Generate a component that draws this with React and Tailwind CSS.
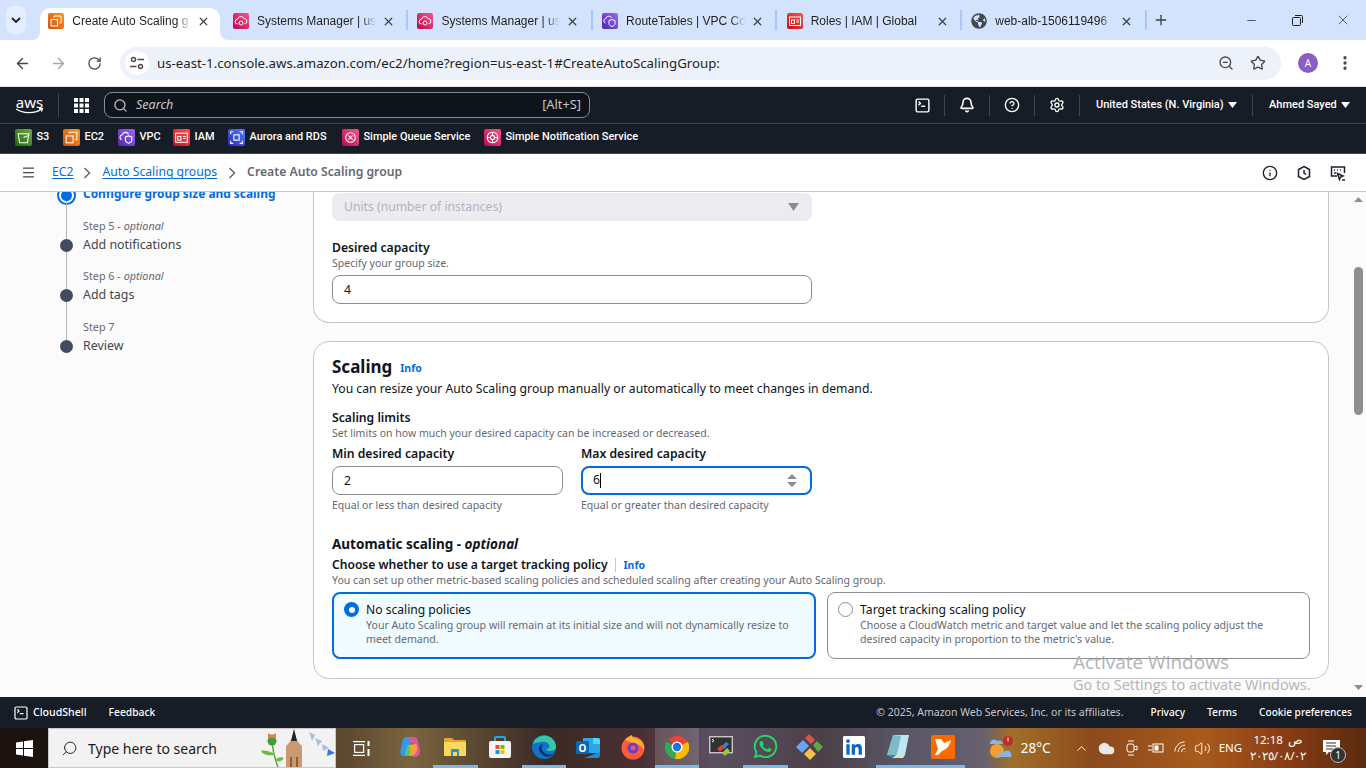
// App.jsx
import {
  ArrowLeft,
  ArrowRight,
  Bell,
  ChevronUp,
  CircleHelp,
  Cloud,
  EllipsisVertical,
  Info,
  Menu,
  Minus,
  Plus,
  RotateCw,
  Search,
  Settings,
  SquareTerminal,
  Star,
  Volume2,
  Wifi,
  X,
  ZoomOut,
} from "lucide-react";
import { FaGlobeAmericas, FaWhatsapp, FaLinkedin } from "react-icons/fa";

const Caret = () => (
  <svg width="9" height="6" viewBox="0 0 9 6" className="shrink-0">
    <path d="M0 0h9L4.5 6z" fill="currentColor" />
  </svg>
);

const Glyph = ({ children }) => (
  <svg viewBox="0 0 16 16" className="size-full" fill="none" stroke="#fff" strokeWidth="1">
    {children}
  </svg>
);

const ec2Glyph = (
  <Glyph>
    <rect x="3" y="6.5" width="6.5" height="6.5" />
    <path d="M6 4.5V3h7v7h-1.5" />
  </Glyph>
);
const pinkCloud = (
  <Glyph>
    <path d="M4.5 11a2.4 2.4 0 0 1 0-4.8 3.4 3.4 0 0 1 6.5-.5 2.6 2.6 0 0 1 .6 5.2" />
    <circle cx="8" cy="10" r="2" />
  </Glyph>
);
const vpcGlyph = (
  <Glyph>
    <path d="M3.5 10a2.2 2.2 0 0 1 .2-4.3 3.4 3.4 0 0 1 6.3-.7" />
    <path d="M7 7.5l3-1 3 1v3.2c0 1.4-1.4 2.3-3 2.8-1.6-.5-3-1.4-3-2.8z" />
  </Glyph>
);
const iamGlyph = (
  <Glyph>
    <rect x="2.5" y="4" width="11" height="8.5" />
    <rect x="4.5" y="7" width="3" height="3.5" />
    <path d="M9.5 7H12M9.5 9H12" />
  </Glyph>
);
const s3Glyph = (
  <Glyph>
    <path d="M3 4.5h10l-1.3 8.5H4.3z" />
    <path d="M8 8l5-2" />
  </Glyph>
);
const auroraGlyph = (
  <Glyph>
    <rect x="5.5" y="5.5" width="5" height="5" />
    <path d="M2.5 5V2.500H5M11 2.500h2.500V5M13.500 11v2.500H11M5 13.500H2.500V11" />
  </Glyph>
);
const sqsGlyph = (
  <Glyph>
    <circle cx="8" cy="8" r="4.5" />
    <path d="M6 6l4 4M10 6l-4 4" />
  </Glyph>
);
const snsGlyph = (
  <Glyph>
    <circle cx="8" cy="8" r="2" />
    <circle cx="8" cy="8" r="5" />
    <path d="M3 8h3M10 8h3M8 3v3M8 10v3" />
  </Glyph>
);

const orange = "bg-gradient-to-tr from-[#c8511b] to-[#ff9900]";
const pink = "bg-gradient-to-tr from-[#b0084d] to-[#ff4f8b]";
const purple = "bg-gradient-to-tr from-[#4d27a8] to-[#a166ff]";
const red = "bg-gradient-to-tr from-[#bd0816] to-[#ff5252]";
const green = "bg-gradient-to-tr from-[#1b660f] to-[#6cae3e]";
const blue = "bg-gradient-to-tr from-[#2e27ad] to-[#527fff]";

const tabs = [
  { title: "Create Auto Scaling g", bg: orange, glyph: ec2Glyph, active: true },
  { title: "Systems Manager | us", bg: pink, glyph: pinkCloud },
  { title: "Systems Manager | us", bg: pink, glyph: pinkCloud },
  { title: "RouteTables | VPC Co", bg: purple, glyph: vpcGlyph },
  { title: "Roles | IAM | Global", bg: red, glyph: iamGlyph },
  { title: "web-alb-1506119496", globe: true },
];

const favorites = [
  { name: "S3", width: "w-[48px]", bg: green, glyph: s3Glyph },
  { name: "EC2", width: "w-[55px]", bg: orange, glyph: ec2Glyph },
  { name: "VPC", width: "w-[55px]", bg: purple, glyph: vpcGlyph },
  { name: "IAM", width: "w-[55px]", bg: red, glyph: iamGlyph },
  { name: "Aurora and RDS", width: "w-[114px]", bg: blue, glyph: auroraGlyph },
  { name: "Simple Queue Service", width: "w-[142px]", bg: pink, glyph: sqsGlyph },
  { name: "Simple Notification Service", width: "w-[170px]", bg: pink, glyph: snsGlyph },
];

function ChromeTab({ tab }) {
  return (
    <div className="relative flex h-full w-[184.6px] items-end justify-center">
      <div
        className={`relative flex h-[32px] w-[180px] items-center pb-[10px] pl-[8px] pt-[4px] ${
          tab.active ? "rounded-t-[10px] bg-white" : ""
        }`}
      >
        {tab.active && (
          <>
            <svg width="8" height="8" viewBox="0 0 8 8" className="absolute bottom-0 left-[-8px]">
              <path d="M8 0v8H0a8 8 0 0 0 8-8z" fill="#fff" />
            </svg>
            <svg width="8" height="8" viewBox="0 0 8 8" className="absolute bottom-0 right-[-8px]">
              <path d="M0 0v8h8a8 8 0 0 1-8-8z" fill="#fff" />
            </svg>
          </>
        )}
        {tab.globe ? (
          <FaGlobeAmericas className="size-[16px] shrink-0 text-[#45494f]" />
        ) : (
          <div className={`size-[16px] shrink-0 rounded-[2px] ${tab.bg}`}>{tab.glyph}</div>
        )}
        <span className="ml-[8px] w-[119px] overflow-hidden whitespace-nowrap font-['Liberation_Sans',sans-serif] text-[12px] text-[#1f1f1f] [mask-image:linear-gradient(90deg,#000_88%,transparent)]">
          {tab.title}
        </span>
        <X size={13} strokeWidth={2.2} className="ml-[6px] shrink-0 text-[#3c4043]" />
      </div>
      {!tab.active && (
        <div className="absolute right-[-1px] top-[10px] h-[20px] w-[2px] bg-[#a8c7fa]" />
      )}
    </div>
  );
}

function ChromeBars() {
  return (
    <>
      <div className="flex h-[40px] items-stretch bg-[#d3e3fd] font-['Noto_Sans',sans-serif]">
        <div className="ml-[6px] mt-[6px] flex h-[28px] w-[20px] items-center justify-center rounded-[8px] bg-[#e4edfd]">
          <svg width="10" height="6" viewBox="0 0 10 6" fill="none" stroke="#1f1f1f" strokeWidth="1.8">
            <path d="M1 1l4 4 4-4" />
          </svg>
        </div>
        <div className="ml-[12px] flex">
          {tabs.map((tab, i) => (
            <ChromeTab key={i} tab={tab} />
          ))}
        </div>
        <div className="flex w-[30px] items-center justify-center text-[#3c4043]">
          <Plus size={16} strokeWidth={2} />
        </div>
        <div className="ml-auto flex text-[#1f1f1f]">
          <div className="flex w-[46px] items-center justify-center">
            <Minus size={13} strokeWidth={1.3} />
          </div>
          <div className="flex w-[46px] items-center justify-center">
            <svg width="11" height="11" viewBox="0 0 11 11" fill="none" stroke="currentColor">
              <rect x="0.5" y="2.5" width="8" height="8" rx="1" />
              <path d="M3 .5h6.5a1 1 0 0 1 1 1V8" />
            </svg>
          </div>
          <div className="flex w-[46px] items-center justify-center">
            <X size={16} strokeWidth={1} />
          </div>
        </div>
      </div>

      <div className="flex h-[47px] items-center border-b border-[#e3e3e3] bg-white pl-[4px] font-['Noto_Sans',sans-serif]">
        <div className="flex w-[36px] justify-center text-[#474747]">
          <ArrowLeft size={17} strokeWidth={2} />
        </div>
        <div className="flex w-[36px] justify-center text-[#a6a6a6]">
          <ArrowRight size={17} strokeWidth={2} />
        </div>
        <div className="flex w-[36px] justify-center text-[#474747]">
          <RotateCw size={15} strokeWidth={2} />
        </div>
        <div className="ml-[8px] flex h-[33px] w-[1161px] items-center rounded-full bg-[#edf2fa] pl-[5px] pr-[7px]">
          <div className="flex size-[24px] items-center justify-center rounded-full bg-white text-[#474747]">
            <svg width="14" height="14" viewBox="0 0 14 14" fill="none" stroke="currentColor" strokeWidth="1.4">
              <circle cx="3.5" cy="3.5" r="2" />
              <path d="M7.5 3.5H14M0 10.5h6.500" />
              <circle cx="10.5" cy="10.5" r="2" />
            </svg>
          </div>
          <span className="ml-[8px] pt-px text-[13.25px] text-[#1f1f1f]">
            us-east-1.console.aws.amazon.com/ec2/home?region=us-east-1#CreateAutoScalingGroup:
          </span>
          <div className="ml-auto flex w-[32px] justify-center text-[#474747]">
            <ZoomOut size={16} strokeWidth={2} />
          </div>
          <div className="flex w-[32px] justify-center text-[#474747]">
            <Star size={16} strokeWidth={2} />
          </div>
        </div>
        <div className="ml-[17px] flex size-[20px] items-center justify-center rounded-full bg-[#8a5cc4] text-[10px] text-white">
          A
        </div>
        <EllipsisVertical size={18} strokeWidth={2.4} className="ml-[18px] text-[#474747]" />
      </div>
    </>
  );
}

function AwsHeader() {
  return (
    <div className="bg-[#161d26] font-['Roboto',sans-serif] text-white">
      <div className="flex h-[37px] items-center border-b border-[#424650]">
        <div className="ml-[15px] flex w-[29px] flex-col items-center font-['Noto_Sans',sans-serif]">
          <span className="text-[15px] leading-[13px]">aws</span>
          <svg width="29" height="6" viewBox="0 0 29 6" fill="none" className="-mt-[1px]">
            <path d="M1 1c7 4.5 18 5 25 .5M24 .5l3.500 0-1 3" stroke="#fff" strokeWidth="1.3" />
          </svg>
        </div>
        <div className="ml-[14px] h-[24px] w-px bg-[#424650]" />
        <svg width="15" height="15" viewBox="0 0 15 15" fill="#fff" className="ml-[15px]">
          <rect width="4" height="4" />
          <rect x="5.5" width="4" height="4" />
          <rect x="11" width="4" height="4" />
          <rect y="5.5" width="4" height="4" />
          <rect x="5.5" y="5.5" width="4" height="4" />
          <rect x="11" y="5.5" width="4" height="4" />
          <rect y="11" width="4" height="4" />
          <rect x="5.5" y="11" width="4" height="4" />
          <rect x="11" y="11" width="4" height="4" />
        </svg>
        <div className="ml-[15px] flex h-[26px] w-[486px] items-center rounded-[8px] border border-[#8c8c94] bg-[#0f141a] px-[8px] font-['Noto_Sans',sans-serif] text-[#c6c6cd]">
          <Search size={15} strokeWidth={2} />
          <span className="ml-[8px] text-[12.5px] italic">Search</span>
          <span className="ml-auto text-[12.8px]">[Alt+S]</span>
        </div>
        <div className="ml-[311px] flex w-[43px] justify-center">
          <SquareTerminal size={17} strokeWidth={2} />
        </div>
        <div className="h-[21px] w-px bg-[#424650]" />
        <div className="flex w-[44px] justify-center">
          <Bell size={16} strokeWidth={2.4} />
        </div>
        <div className="h-[21px] w-px bg-[#424650]" />
        <div className="flex w-[44px] justify-center">
          <CircleHelp size={16} strokeWidth={2} />
        </div>
        <div className="h-[21px] w-px bg-[#424650]" />
        <div className="flex w-[44px] justify-center">
          <Settings size={16} strokeWidth={2} />
        </div>
        <div className="h-[21px] w-px bg-[#424650]" />
        <div className="flex w-[172px] items-center gap-[4px] pl-[16px] text-[11px] font-medium">
          <span className="whitespace-nowrap">United States (N. Virginia)</span>
          <Caret />
        </div>
        <div className="h-[21px] w-px bg-[#424650]" />
        <div className="flex w-[113px] items-center gap-[4px] pl-[16px] text-[11px] font-medium">
          <span className="whitespace-nowrap">Ahmed Sayed</span>
          <Caret />
        </div>
      </div>
      <div className="flex h-[30px] items-center border-b border-[#424650] pb-[1px] pl-[15px]">
        {favorites.map((fav) => (
          <div key={fav.name} className={`flex shrink-0 items-center gap-[4.5px] ${fav.width}`}>
            <div className={`size-[17px] shrink-0 rounded-[2px] ${fav.bg}`}>{fav.glyph}</div>
            <span className="mb-[1px] whitespace-nowrap text-[10.95px] font-medium">{fav.name}</span>
          </div>
        ))}
      </div>
    </div>
  );
}

function Breadcrumbs() {
  const chevron = (
    <svg width="8" height="12" viewBox="0 0 8 12" fill="none" stroke="#656871" strokeWidth="1.5">
      <path d="M1.5 1l5 5-5 5" />
    </svg>
  );
  return (
    <div className="flex h-[38px] items-center border-b border-[#c6c6cd] bg-white pl-[21px] pr-[20px] font-['Noto_Sans',sans-serif] text-[12.2px]">
      <Menu size={15} strokeWidth={2} className="text-[#424650]" />
      <a className="ml-[16px] text-[#006ce0] underline underline-offset-2">EC2</a>
      <div className="ml-[10px] mr-[11px]">{chevron}</div>
      <a className="text-[#006ce0] underline underline-offset-2">Auto Scaling groups</a>
      <div className="ml-[11px] mr-[11px]">{chevron}</div>
      <span className="font-semibold text-[#656871]">Create Auto Scaling group</span>
      <div className="ml-auto flex items-center gap-[18px] text-[#1b232d]">
        <Info size={16} strokeWidth={2} />
        <svg width="16" height="16" viewBox="0 0 16 16" fill="none" stroke="currentColor" strokeWidth="1.5">
          <path d="M8 1.5l5.500 3v7L8 14.500l-5.500-3v-7z" />
          <path d="M8 5v3l2 1.500" />
        </svg>
        <svg width="16" height="16" viewBox="0 0 16 16" fill="none" stroke="currentColor" strokeWidth="1.5">
          <path d="M7 11H1.500V2h13v6" />
          <path d="M4 5h1M7 5h1M10 5h1M4 8h2" />
          <path d="M7.5 8.500l2 6 1-2.500 2.500-1zM12 15h3" />
        </svg>
      </div>
    </div>
  );
}

function StepRow({ step, optional, label }) {
  return (
    <div className="flex h-[50.5px]">
      <div className="flex w-[13px] flex-col items-center">
        <div className="w-px flex-1 bg-[#b4b4bb]" />
        <div className="size-[13px] shrink-0 rounded-full bg-[#414d5c]" />
      </div>
      <div className="mb-[-2px] ml-[10px] flex flex-col justify-end">
        <span className="text-[10.8px] leading-[15px] text-[#656871]">
          {step}
          {optional && (
            <>
              {" - "}
              <i>optional</i>
            </>
          )}
        </span>
        <span className="mt-[3px] text-[12.4px] leading-[18px] text-[#424650]">{label}</span>
      </div>
    </div>
  );
}

function Sidebar() {
  return (
    <div className="w-[313px] shrink-0 pl-[60px]">
      <div className="flex items-start">
        <div className="mt-[-6px] flex w-[13px] justify-center">
          <div className="flex size-[19px] shrink-0 items-center justify-center rounded-full border-[2px] border-[#006ce0] bg-white">
            <div className="size-[11px] rounded-full bg-[#006ce0]" />
          </div>
        </div>
        <span className="ml-[10px] mt-[-8px] text-[11.9px] font-bold leading-[18px] text-[#006ce0]">
          Configure group size and scaling
        </span>
      </div>
      <div className="mt-[-4px]">
        <StepRow step="Step 5" optional label="Add notifications" />
        <StepRow step="Step 6" optional label="Add tags" />
        <StepRow step="Step 7" label="Review" />
      </div>
    </div>
  );
}

const InfoLink = ({ className }) => (
  <span className={`text-[10.5px] font-bold text-[#006ce0] ${className}`}>Info</span>
);

function FormContent() {
  return (
    <div className="w-[1016px] shrink-0 text-[#0f141a]">
      <div className="h-[131px] rounded-b-[16px] border-x border-b border-[#c6c6cd] bg-white px-[18px] pt-px">
        <div className="flex h-[28px] w-[480px] items-center justify-between rounded-[8px] bg-[#ebebf0] pl-[12px] pr-[13px] text-[12.2px] text-[#b4b4bb]">
          <span>Units (number of instances)</span>
          <svg width="11" height="8" viewBox="0 0 11 8">
            <path d="M0 0h11L5.500 8z" fill="#8c8c94" />
          </svg>
        </div>
        <div className="mt-[18px] text-[12.2px] font-semibold leading-[18px]">Desired capacity</div>
        <div className="mt-[-1px] text-[10.5px] leading-[14px] text-[#656871]">Specify your group size.</div>
        <div className="mt-[5px] flex h-[29px] w-[480px] items-center rounded-[8px] border border-[#8c8c94] pl-[11px] pt-px text-[12.2px]">
          4
        </div>
      </div>

      <div className="mt-[18px] h-[338px] rounded-[16px] border border-[#c6c6cd] bg-white px-[18px] pt-[13px]">
        <div className="flex items-center">
          <span className="text-[17px] font-bold leading-[24px]">Scaling</span>
          <InfoLink className="ml-[8px] mt-[3px]" />
        </div>
        <p className="mt-px text-[12.2px] leading-[18px]">
          You can resize your Auto Scaling group manually or automatically to meet changes in demand.
        </p>
        <div className="mt-[11px] text-[12.2px] font-semibold leading-[18px]">Scaling limits</div>
        <div className="mt-[-1px] text-[10.5px] leading-[14px] text-[#656871]">
          Set limits on how much your desired capacity can be increased or decreased.
        </div>

        <div className="mt-[5px] flex gap-[18px]">
          <div className="w-[231px]">
            <div className="text-[12.2px] font-semibold leading-[18px]">Min desired capacity</div>
            <div className="mt-[3px] flex h-[29px] items-center rounded-[8px] border border-[#8c8c94] pl-[11px] pt-px text-[12.2px]">
              2
            </div>
            <div className="mt-[3px] text-[10.5px] leading-[14px] text-[#656871]">
              Equal or less than desired capacity
            </div>
          </div>
          <div className="w-[231px]">
            <div className="text-[12.2px] font-semibold leading-[18px]">Max desired capacity</div>
            <div className="mt-[3px] flex h-[29px] items-center rounded-[8px] border-[2px] border-[#006ce0] pl-[10px] pr-[13px] text-[12.2px]">
              <span>6</span>
              <div className="h-[15px] w-px bg-black" />
              <svg width="10" height="15" viewBox="0 0 10 15" className="ml-auto">
                <path d="M0 6h10L5 1zM0 9h10L5 14z" fill="#8c8c94" />
              </svg>
            </div>
            <div className="mt-[3px] text-[10.5px] leading-[14px] text-[#656871]">
              Equal or greater than desired capacity
            </div>
          </div>
        </div>

        <div className="mt-[22px] text-[13.5px] font-bold leading-[20px]">
          Automatic scaling - <i>optional</i>
        </div>
        <div className="mt-[2px] flex items-center text-[12.1px] font-semibold leading-[18px]">
          <span>Choose whether to use a target tracking policy</span>
          <div className="ml-[7px] h-[14px] w-px bg-[#c6c6cd]" />
          <InfoLink className="ml-[8px]" />
        </div>
        <div className="mt-[-1px] text-[10.55px] leading-[14px] text-[#656871]">
          You can set up other metric-based scaling policies and scheduled scaling after creating your Auto Scaling group.
        </div>

        <div className="mt-[5px] flex gap-[11px]">
          <div className="flex h-[67px] w-[484px] rounded-[8px] border-[2px] border-[#006ce0] bg-[#f0fbff] pl-[10px] pr-[14px] pt-[7px]">
            <div className="mt-px flex size-[15px] shrink-0 items-center justify-center rounded-full bg-[#006ce0]">
              <div className="size-[6px] rounded-full bg-white" />
            </div>
            <div className="ml-[7px]">
              <div className="text-[12.1px] leading-[17px]">No scaling policies</div>
              <div className="text-[10.6px] leading-[14px] text-[#656871]">
                Your Auto Scaling group will remain at its initial size and will not dynamically resize to meet demand.
              </div>
            </div>
          </div>
          <div className="flex h-[67px] w-[483px] rounded-[8px] border border-[#8c8c94] pl-[10px] pr-[14px] pt-[8px]">
            <div className="mt-px size-[15px] shrink-0 rounded-full border border-[#8c8c94] bg-white" />
            <div className="ml-[7px]">
              <div className="text-[12.2px] leading-[17px]">Target tracking scaling policy</div>
              <div className="text-[10.55px] leading-[14px] text-[#656871]">
                Choose a CloudWatch metric and target value and let the scaling policy adjust the desired capacity in proportion to the metric's value.
              </div>
            </div>
          </div>
        </div>
      </div>
    </div>
  );
}

function Scrollbar() {
  return (
    <div className="ml-[22px] flex w-[14px] flex-col items-center pt-[5px]">
      <svg width="9" height="5" viewBox="0 0 9 5" className="shrink-0">
        <path d="M0 5h9L4.5 0z" fill="#8f8f8f" />
      </svg>
      <div className="mt-[65px] h-[148px] w-[9px] shrink-0 rounded-full bg-[#8f8f8f]" />
      <svg width="9" height="5" viewBox="0 0 9 5" className="mb-[7px] mt-auto shrink-0">
        <path d="M0 0h9L4.5 5z" fill="#8f8f8f" />
      </svg>
    </div>
  );
}

function AwsFooter() {
  return (
    <div className="flex h-[31px] shrink-0 items-center bg-[#161d26] pl-[13px] pr-[14px] font-['Noto_Sans',sans-serif] text-[10.5px] text-white">
      <SquareTerminal size={16} strokeWidth={1.8} />
      <span className="ml-[4px] text-[10.6px] font-medium">CloudShell</span>
      <span className="ml-[22px] text-[10.3px] font-medium">Feedback</span>
      <span className="ml-auto text-[#c6c6cd]">© 2025, Amazon Web Services, Inc. or its affiliates.</span>
      <span className="ml-[27px] text-[10.1px] font-medium">Privacy</span>
      <span className="ml-[22px] text-[10.3px] font-medium">Terms</span>
      <span className="ml-[22px] text-[10.1px] font-medium">Cookie preferences</span>
    </div>
  );
}

const taskIcons = [
  {
    key: "copilot",
    icon: (
      <svg width="24" height="24" viewBox="0 0 24 24">
        <path d="M8 2h7c2 0 3 1 3.500 3L21 15c.5 3-1 6-4 7h-3l2-10c-1-4-4-5-8-4z" fill="#e0559c" />
        <path d="M8 2c-3 0-4 2-4.500 4L1.500 16c-.5 3 1 5 3 5h8l-1.500-9c.5-4 1-7-3-10z" fill="#2d9cf0" />
        <path d="M9 10l8-1c2 3 2 6-1 10-2 2-4 2-6 2 2-4 1-8-1-11z" fill="#f3a33f" />
        <path d="M9 10c-2 3-3 6-3 11l5-1c1-4 0-7-2-10z" fill="#58c76b" />
      </svg>
    ),
  },
  {
    key: "explorer",
    open: true,
    icon: (
      <svg width="22" height="20" viewBox="0 0 22 20">
        <path d="M0 2a1 1 0 0 1 1-1h7l2 2h11a1 1 0 0 1 1 1v3H0z" fill="#e5a82e" />
        <rect y="5" width="22" height="14" rx="1" fill="#fbd75b" />
        <path d="M7 19v-6a1 1 0 0 1 1-1h6a1 1 0 0 1 1 1v6h-2v-4H9v4z" fill="#2f8ecb" />
      </svg>
    ),
  },
  {
    key: "store",
    icon: (
      <svg width="24" height="24" viewBox="0 0 24 24">
        <path d="M7 7V3a1 1 0 0 1 1-1h8a1 1 0 0 1 1 1v4" fill="none" stroke="#22a7e0" strokeWidth="2" />
        <rect x="1" y="6" width="22" height="17" rx="2" fill="#f4f4f4" />
        <rect x="7.5" y="10" width="4" height="4" fill="#f25022" />
        <rect x="12.5" y="10" width="4" height="4" fill="#7fba00" />
        <rect x="7.5" y="15" width="4" height="4" fill="#00a4ef" />
        <rect x="12.5" y="15" width="4" height="4" fill="#ffb900" />
      </svg>
    ),
  },
  {
    key: "edge",
    open: true,
    icon: (
      <svg width="24" height="24" viewBox="0 0 24 24">
        <circle cx="12" cy="12" r="12" fill="#1173c8" />
        <path d="M1 9C3 2 10 0 15 1c5 1 9 6 9 11 0 3-3 4-6 4s-4-1-4-2c3 0 4-2 3-4-1-3-5-4-8-3-3 0-6 1-8 2z" fill="#37c6a5" />
        <path d="M8 17c-2-3-1-7 3-8-3 3-1 8 3 10 2 1 5 1 7-1-2 4-8 6-13-1z" fill="#0c2d63" />
      </svg>
    ),
  },
  {
    key: "outlook",
    icon: (
      <svg width="24" height="24" viewBox="0 0 24 24">
        <path d="M7 3h10l7 5v10H7z" fill="#28a8ea" />
        <path d="M17 3h5a2 2 0 0 1 2 2v4h-7z" fill="#50d9ff" />
        <path d="M8 23l16-6v3a3 3 0 0 1-3 3z" fill="#1490df" />
        <rect y="6" width="13" height="13" rx="1.5" fill="#0f64b4" />
        <text x="6.5" y="16.5" textAnchor="middle" fontSize="10" fontWeight="700" fill="#fff" fontFamily="Noto Sans">
          O
        </text>
      </svg>
    ),
  },
  {
    key: "firefox",
    icon: (
      <svg width="24" height="26" viewBox="0 0 24 26">
        <circle cx="12" cy="14" r="11.5" fill="#ff5b3a" />
        <path d="M4 6c2-3 5-4 7-5 0 3 3 3 6 4 4 2 7 6 6 11-4-6-8-6-11-6-2-2-5-3-8-4z" fill="#ffb02e" />
        <circle cx="12" cy="14" r="5.5" fill="#6a3fc4" />
        <circle cx="12" cy="14" r="2.5" fill="#e84f9b" />
      </svg>
    ),
  },
  {
    key: "chrome",
    open: true,
    light: true,
    icon: (
      <svg width="24" height="24" viewBox="0 0 24 24">
        <path d="M12 12L3.500 4.500A12 12 0 0 1 23 8z" fill="#ea4335" />
        <path d="M12 12L1.300 6.500A12 12 0 0 0 10 24z" fill="#34a853" />
        <path d="M12 12l11-5A12 12 0 0 1 10 24z" fill="#fbbc04" />
        <circle cx="12" cy="12" r="5.5" fill="#fff" />
        <circle cx="12" cy="12" r="4.2" fill="#1a73e8" />
      </svg>
    ),
  },
  {
    key: "terminal-app",
    icon: (
      <svg width="24" height="22" viewBox="0 0 24 22">
        <rect x=".7" y=".7" width="22.6" height="16" fill="#333" stroke="#c7c7c7" strokeWidth="1.4" />
        <path d="M3 3l2 1.500L3 6" fill="none" stroke="#fff" />
        <path d="M12 11l5-5 3 2-5 5z" fill="#3b82e0" />
        <path d="M8 13l4-4 3 3-4 4z" fill="#e33b3b" />
        <path d="M13 17l5-5 3 3-5 5z" fill="#9cca3c" />
      </svg>
    ),
  },
  { key: "whatsapp", open: true, icon: <FaWhatsapp size={27} className="text-[#25d366]" /> },
  {
    key: "kite",
    icon: (
      <svg width="28" height="26" viewBox="0 0 28 26">
        <path d="M0 13l7-7 6 6-7 7z" fill="#6aa5f0" />
        <path d="M9 4l4-4 6 6-4 4z" fill="#d9534f" />
        <path d="M17 11l4-4 6 6-5 5z" fill="#5fa84a" />
        <path d="M8 20l6-6 6 6-6 6z" fill="#f2c14e" />
      </svg>
    ),
  },
  {
    key: "linkedin",
    icon: (
      <div className="relative flex size-[22px] items-center justify-center rounded-[2px] bg-[#0a66c2]">
        <FaLinkedin size={26} className="text-white" />
      </div>
    ),
  },
  {
    key: "notepad",
    open: true,
    icon: (
      <svg width="22" height="24" viewBox="0 0 22 24">
        <path d="M6 0h16l-4 20H0z" fill="#bfe7ee" />
        <path d="M6 0l-6 20 6 4 3-1 5-22z" fill="#4f9fb0" opacity=".6" />
        <path d="M18 20l-2 3H6l3-3z" fill="#e8e0b0" />
      </svg>
    ),
  },
  {
    key: "orange-app",
    open: true,
    icon: (
      <div className="flex size-[24px] items-center justify-center rounded-[2px] bg-[#ff6a00]">
        <svg width="18" height="18" viewBox="0 0 18 18" fill="#fff">
          <path d="M1 1h6l3 4c3-1 5-2 7-3-1 5-4 9-9 11l-4 4H1l3-6z" />
        </svg>
      </div>
    ),
  },
];

function Taskbar() {
  return (
    <div className="flex h-[40px] shrink-0 items-stretch bg-[linear-gradient(90deg,#1c120e_0%,#1c120e_3.5%,#5c4730_25%,#7a6440_30%,#3a2a24_40%,#4a3034_47%,#5a5060_52%,#4c4048_60%,#5a5666_66%,#666070_72%,#a0702a_74%,#8c4a1c_80%,#a85b1c_88%,#8a3d14_94%,#5a2a10_100%)] font-['Noto_Sans',sans-serif] text-white">
      <div className="flex w-[48px] items-center justify-center">
        <svg width="17" height="17" viewBox="0 0 17 17" fill="#fff">
          <path d="M0 2.500l7-1v6.500H0zM8 1.300L17 0v8H8zM0 9h7v6.500l-7-1zM8 9h9v8l-9-1.300z" />
        </svg>
      </div>
      <div className="flex w-[288px] items-center border border-[#c8c8c8] bg-[#f2f2f2] pl-[12px] text-[#1a1a1a]">
        <Search size={17} strokeWidth={1.3} className="-scale-x-100" />
        <span className="ml-[10px] text-[14px]">Type here to search</span>
        <svg width="80" height="38" viewBox="0 0 80 38" className="ml-auto">
          <path d="M17 14c1 8 2 14 6 24" stroke="#5aa53c" strokeWidth="1.5" fill="none" />
          <path d="M18 24c-4-2-9-3-12-2 2 4 8 5 13 4zM21 30c3-2 6-2 8-1-2 3-5 4-7 3z" fill="#6fb84a" />
          <circle cx="17" cy="12" r="4.5" fill="#4a9a3c" />
          <path d="M13 4c2 2 6 2 8 0v5h-8z" fill="#d9824a" />
          <path d="M31 38V17l3-3 3-5 2-9 2 9 3 5 3 3v21z" fill="#c99a70" />
          <path d="M36 12l3-12 3 12z" fill="#222" />
          <path d="M35 38v-10h2v10zM41 38v-10h2v10z" fill="#8a5f3c" />
          <path d="M54 3l6 3-3 6zM60 9l7 3-4 5zM67 15l7 4-6 3z" fill="#a8c0de" />
          <path d="M73 20l7 4-8 3z" fill="#2b7de0" />
        </svg>
      </div>
      <div className="mr-[3px] flex w-[50px] items-center justify-center">
        <svg width="17" height="15" viewBox="0 0 17 15" fill="none" stroke="#fff" strokeWidth="1.2">
          <path d="M0 .6h12M0 14.400h12" />
          <rect x="1.6" y="3.6" width="9" height="7.8" />
          <path d="M15.500 0v5M15.500 8v7" strokeWidth="2" />
        </svg>
      </div>
      {taskIcons.map((item) => (
        <div
          key={item.key}
          className={`flex w-[44.3px] items-center justify-center border-b-[3px] ${
            item.open ? "border-[#76b9ed]" : "border-transparent"
          } ${item.light ? "bg-white/15" : ""}`}
        >
          {item.icon}
        </div>
      ))}
      <div className="ml-[23px] flex items-center">
        <svg width="26" height="26" viewBox="0 0 26 26">
          <path d="M2 9a4 4 0 0 1 7-3 4 4 0 0 1 6 3H2z" fill="#88b4e8" />
          <circle cx="9" cy="16" r="7" fill="#f0a030" />
          <circle cx="20" cy="6" r="5" fill="#c62828" />
          <rect x="19.5" y="2.5" width="1" height="4" fill="#fff" />
          <path d="M9 22a4 4 0 0 1 6-4 4 4 0 0 1 8 4z" fill="#88b4e8" />
        </svg>
        <span className="ml-[7px] text-[13.5px]">28°C</span>
        <ChevronUp size={15} strokeWidth={1.5} className="ml-[23px]" />
        <Cloud size={17} fill="#e8e8e8" className="ml-[9px] text-[#e8e8e8]" />
        <svg width="12" height="16" viewBox="0 0 12 16" fill="none" stroke="#fff" className="ml-[11px]">
          <rect x="1" y="4" width="7" height="8" rx="2" />
          <path d="M8 7l3-1v4l-3-1M2 1h6M2 15h6" />
        </svg>
        <svg width="16" height="14" viewBox="0 0 16 14" fill="none" stroke="#fff" className="ml-[10px]">
          <rect x="5" y="3" width="10" height="8" />
          <path d="M0 5h4M0 9h4" />
          <rect x="7" y="5" width="3" height="4" fill="#fff" />
        </svg>
        <Wifi size={16} strokeWidth={1.3} className="ml-[9px] -rotate-45" />
        <Volume2 size={17} strokeWidth={1.3} className="ml-[5px]" />
        <span className="ml-[8px] text-[11.5px]">ENG</span>
      </div>
      <div className="ml-[1px] flex w-[70px] flex-col items-center justify-center text-[11.5px] leading-[16px]">
        <span className="flex gap-[5px]">
          <span>12:18</span>
          <span>ص</span>
        </span>
        <span>٢٠٢٥/٠٨/٠٢</span>
      </div>
      <div className="relative ml-[3px] flex w-[30px] items-center justify-center">
        <svg width="17" height="16" viewBox="0 0 17 16">
          <path d="M0 0h17v12H6l-3 3v-3H0z" fill="#fff" />
          <path d="M3 3h10M3 6h10M3 9h7" stroke="#333" />
        </svg>
        <div className="absolute bottom-[5px] right-0 flex size-[16px] items-center justify-center rounded-full border border-[#bbb] bg-[#333] text-[10px]">
          1
        </div>
      </div>
    </div>
  );
}

export default function App() {
  return (
    <div className="flex h-[768px] w-[1366px] flex-col overflow-hidden bg-white">
      <ChromeBars />
      <AwsHeader />
      <Breadcrumbs />
      <div className="relative flex h-[505px] shrink-0 overflow-hidden bg-[#fbfbfb] font-['Noto_Sans',sans-serif]">
        <Sidebar />
        <FormContent />
        <Scrollbar />
        <div className="absolute left-[1073px] top-[457px] font-['Open_Sans',sans-serif] text-[#b3b3b3]">
          <div className="text-[19px] leading-[26px]">Activate Windows</div>
          <div className="text-[14.5px] leading-[20px]">Go to Settings to activate Windows.</div>
        </div>
      </div>
      <AwsFooter />
      <Taskbar />
    </div>
  );
}
